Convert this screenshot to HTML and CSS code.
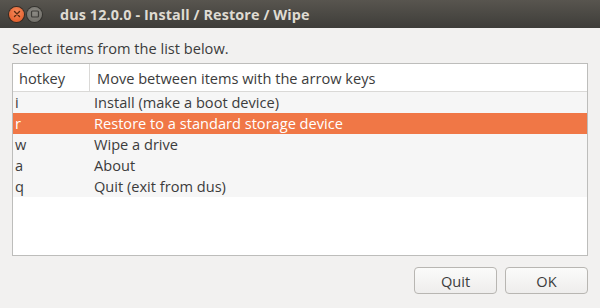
FILE: index.html
```html
<!DOCTYPE html>
<html>
<head>
<meta charset="utf-8">
<link rel="stylesheet" href="styles.css">
</head>
<body>
<div class="window">
  <div class="titlebar">
    <div class="wbtn close"><svg width="14" height="14" viewBox="0 0 14 14"><path d="M4.5 4.5L9.5 9.5M9.5 4.5L4.5 9.5" stroke="#5a2a10" stroke-width="1.4" stroke-linecap="round"/></svg></div>
    <div class="wbtn max"><svg width="14" height="14" viewBox="0 0 14 14"><rect x="3.5" y="4" width="7" height="6" rx="1" fill="none" stroke="#3e3d39" stroke-width="1.2"/></svg></div>
    <div class="title">dus 12.0.0 - Install / Restore / Wipe</div>
  </div>
  <div class="content">
    <div class="prompt">Select items from the list below.</div>
    <div class="list">
      <div class="row head">
        <div class="c1">hotkey</div>
        <div class="c2">Move between items with the arrow keys</div>
      </div>
      <div class="row item"><div class="c1">i</div><div class="c2">Install (make a boot device)</div></div>
      <div class="row item sel"><div class="c1">r</div><div class="c2">Restore to a standard storage device</div></div>
      <div class="row item"><div class="c1">w</div><div class="c2">Wipe a drive</div></div>
      <div class="row item"><div class="c1">a</div><div class="c2">About</div></div>
      <div class="row item"><div class="c1">q</div><div class="c2">Quit (exit from dus)</div></div>
    </div>
    <div class="buttons">
      <button class="btn">Quit</button>
      <button class="btn">OK</button>
    </div>
  </div>
</div>
</body>
</html>
```
FILE: styles.css
```css
html, body { margin: 0; padding: 0; }
body { width: 600px; height: 308px; overflow: hidden; background: #f2f1f0; font-family: "Open Sans", "Noto Sans", sans-serif; color: #3c3c3c; }
.window { width: 600px; height: 308px; display: flex; flex-direction: column; }
.titlebar { height: 28px; background: linear-gradient(#58554f, #3e3d39); display: flex; align-items: center; padding-left: 9px; box-sizing: border-box; }
.wbtn { width: 15px; height: 15px; border-radius: 50%; display: flex; align-items: center; justify-content: center; margin-right: 3px; }
.wbtn svg { display: block; }
.close { background: radial-gradient(circle at 50% 35%, #f58a5c, #e0541f); box-shadow: 0 0 0 1px #3a2a20; }
.max { background: radial-gradient(circle at 50% 35%, #8c8a84, #6c6a64); box-shadow: 0 0 0 1px #34332f; }
.title { color: #dfdbd2; font-weight: bold; font-size: 14.4px; margin-left: 15px; letter-spacing: 0.1px; }
.content { flex: 1; padding: 10px 12px 0 12px; display: flex; flex-direction: column; }
.prompt { font-size: 14.6px; height: 25px; line-height: 20px; }
.list { height: 193px; background: #fff; border: 1px solid #bdbdbb; box-sizing: border-box; width: 576px; }
.row { display: flex; font-size: 14.6px; }
.head { height: 28px; border-bottom: 1px solid #dad9d7; align-items: center; box-sizing: border-box; }
.head .c1 { width: 77px; padding-left: 6px; border-right: 1px solid #dad9d7; height: 100%; display: flex; align-items: center; box-sizing: border-box; }
.head .c2 { padding-left: 7px; }
.item { height: 21px; line-height: 21px; background: #f6f6f6; }
.item .c1 { width: 79px; padding-left: 2px; }
.item.sel { background: #f07746; color: #fff; }
.buttons { display: flex; justify-content: flex-end; gap: 8px; margin-top: 11px; }
.btn { width: 83px; height: 27px; font-family: inherit; font-size: 14.6px; color: #3c3c3c; border: 1px solid #b8b6b2; border-radius: 4px; background: linear-gradient(#fbfbfa, #eeedec); padding: 0; }
```
